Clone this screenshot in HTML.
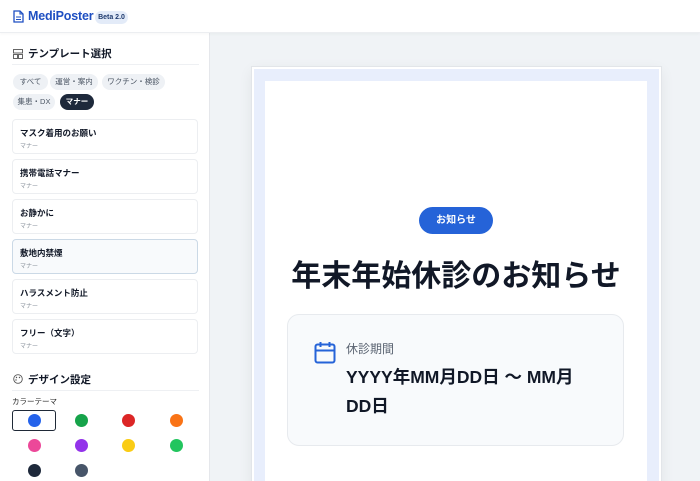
<!DOCTYPE html>
<html style="width:700px;height:481px;overflow:hidden"><head><meta charset="utf-8"><style>
*{box-sizing:border-box;margin:0;padding:0}
body{width:700px;height:481px;overflow:hidden;background:#f0f3f6;font-family:"Liberation Sans","Noto Sans CJK JP",sans-serif;position:relative;color:#111827}
.hdr{position:absolute;left:0;top:0;width:700px;height:33px;background:#fff;border-bottom:1px solid #eceef1;box-shadow:0 1px 3px rgba(0,0,0,.04);z-index:2}
.logo{position:absolute;left:28px;top:9px;font-size:12.5px;font-weight:bold;color:#1e4fc2;letter-spacing:-.2px}
.beta{position:absolute;left:95px;top:11px;width:33px;height:13px;border-radius:7px;background:#e3ebf8;font-size:7px;font-weight:bold;color:#1e3a6e;text-align:center;line-height:13px}
.side{position:absolute;left:0;top:33px;width:210px;height:448px;background:#fff;border-right:1px solid #e5e7eb}
.h{position:absolute;left:28px;font-size:10.5px;font-weight:bold;color:#111827}
.div{position:absolute;left:12px;width:187px;height:1px;background:#eef0f3}
.chip{position:absolute;height:16px;border-radius:8px;background:#eef1f5;font-size:7.5px;color:#4b5563;text-align:center;line-height:16px}
.card{position:absolute;left:12px;width:186px;height:35px;border:1px solid #eceef1;border-radius:4px;background:#fff}
.card b{position:absolute;left:7px;top:7px;font-size:8.5px;color:#111827}
.card i{position:absolute;left:7px;top:21px;font-size:6px;font-style:normal;color:#8a929c}
.sw{position:absolute;width:13px;height:13px;border-radius:50%}
.poster{position:absolute;left:252px;top:67px;width:409px;height:420px;background:#e8eefc;border:2px solid #fff;outline:1px solid #e2e5e9;box-shadow:0 4px 14px rgba(0,0,0,.07)}
.inner{position:absolute;left:11px;top:12px;width:382px;height:420px;background:#fff}
</style></head><body>
<div class="hdr">
<svg style="position:absolute;left:13px;top:10px" width="11" height="13" viewBox="0 0 11 13"><path d="M1 1h6l3 3v8H1z" fill="none" stroke="#1e4fc2" stroke-width="1.3"/><path d="M7 1v3h3M3 7h5M3 9.5h5" stroke="#1e4fc2" stroke-width="1.1" fill="none"/></svg>
<div class="logo">MediPoster</div><div class="beta">Beta 2.0</div>
</div>
<div class="side">
<svg style="position:absolute;left:13px;top:16px" width="10" height="10" viewBox="0 0 10 10"><rect x=".5" y=".5" width="9" height="3.5" fill="none" stroke="#555" stroke-width=".9"/><rect x=".5" y="5.5" width="4" height="4" fill="none" stroke="#555" stroke-width=".9"/><rect x="5.5" y="5.5" width="4" height="4" fill="none" stroke="#555" stroke-width=".9"/></svg>
<div class="h" style="top:13px">テンプレート選択</div>
<div class="div" style="top:31px"></div>
<div class="chip" style="left:13px;top:41px;width:35px">すべて</div>
<div class="chip" style="left:50px;top:41px;width:48px">運営・案内</div>
<div class="chip" style="left:102px;top:41px;width:63px">ワクチン・検診</div>
<div class="chip" style="left:13px;top:61px;width:42px">集患・DX</div>
<div class="chip" style="left:60px;top:61px;width:34px;background:#1e293b;color:#fff;font-weight:bold">マナー</div>
<div class="card" style="top:86px"><b>マスク着用のお願い</b><i>マナー</i></div>
<div class="card" style="top:126px"><b>携帯電話マナー</b><i>マナー</i></div>
<div class="card" style="top:166px"><b>お静かに</b><i>マナー</i></div>
<div class="card" style="top:206px;background:#f8fafc;border-color:#cbd9e6"><b>敷地内禁煙</b><i>マナー</i></div>
<div class="card" style="top:246px"><b>ハラスメント防止</b><i>マナー</i></div>
<div class="card" style="top:286px"><b>フリー（文字）</b><i>マナー</i></div>
<svg style="position:absolute;left:13px;top:341px" width="10" height="10" viewBox="0 0 10 10"><circle cx="5" cy="5" r="4.3" fill="none" stroke="#555" stroke-width=".9"/><circle cx="3.5" cy="3.5" r=".7" fill="#555"/><circle cx="6.5" cy="3.5" r=".7" fill="#555"/><circle cx="3" cy="6" r=".7" fill="#555"/></svg>
<div class="h" style="top:339px">デザイン設定</div>
<div class="div" style="top:357px"></div>
<div style="position:absolute;left:12px;top:363px;font-size:7.5px;color:#222">カラーテーマ</div>
<div style="position:absolute;left:12px;top:377px;width:44px;height:21px;border:1.5px solid #1f2937;border-radius:3px"></div>
<div class="sw" style="left:28px;top:381px;background:#2563eb"></div>
<div class="sw" style="left:75px;top:381px;background:#16a34a"></div>
<div class="sw" style="left:122px;top:381px;background:#dc2626"></div>
<div class="sw" style="left:170px;top:381px;background:#f97316"></div>
<div class="sw" style="left:28px;top:406px;background:#ec4899"></div>
<div class="sw" style="left:75px;top:406px;background:#9333ea"></div>
<div class="sw" style="left:122px;top:406px;background:#facc15"></div>
<div class="sw" style="left:170px;top:406px;background:#22c55e"></div>
<div class="sw" style="left:28px;top:431px;background:#1e293b"></div>
<div class="sw" style="left:75px;top:431px;background:#475569"></div>
</div>
<div class="poster"><div class="inner">
<div style="position:absolute;left:154px;top:126px;width:74px;height:27px;border-radius:14px;background:#2563d8;color:#fff;font-size:10px;font-weight:bold;text-align:center;line-height:27px">お知らせ</div>
<div style="position:absolute;left:0;top:170px;width:382px;text-align:center;font-size:30px;font-weight:bold;color:#111827">年末年始休診のお知らせ</div>
<div style="position:absolute;left:22px;top:233px;width:337px;height:132px;background:#f8fafc;border:1px solid #e7eaee;border-radius:12px">
<svg style="position:absolute;left:26px;top:26px" width="22" height="23" viewBox="0 0 22 23"><rect x="1.5" y="3.5" width="19" height="18" rx="2" fill="none" stroke="#2563d8" stroke-width="2"/><path d="M1.5 9.5h19M6.5 1v5M15.5 1v5" stroke="#2563d8" stroke-width="2"/></svg>
<div style="position:absolute;left:58px;top:25px;font-size:12px;color:#5b6472">休診期間</div>
<div style="position:absolute;left:58px;top:48px;width:245px;font-size:17.5px;font-weight:bold;line-height:29px;color:#111827">YYYY年MM月DD日 〜 MM月DD日</div>
</div>
</div></div>
</body></html>
